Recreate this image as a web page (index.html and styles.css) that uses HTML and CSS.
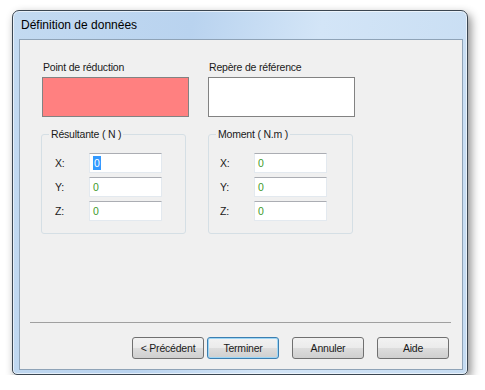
FILE: index.html
```html
<!DOCTYPE html>
<html lang="fr">
<head>
    <meta charset="utf-8">
    <title>Définition de données</title>
    <link rel="stylesheet" href="styles.css">
</head>
<body>
    <div class="window">
        <div class="titlebar">Définition de données</div>
        <div class="client">
            <div class="refs">
                <div class="ref">
                    <div class="ref-label">Point de réduction</div>
                    <div class="ref-box red"></div>
                </div>
                <div class="ref">
                    <div class="ref-label">Repère de référence</div>
                    <div class="ref-box"></div>
                </div>
            </div>
            <div class="groups">
                <div class="group">
                    <div class="group-title">Résultante ( N )</div>
                    <div class="row"><span class="axis">X:</span><div class="field"><span class="sel">0</span></div></div>
                    <div class="row"><span class="axis">Y:</span><div class="field">0</div></div>
                    <div class="row"><span class="axis">Z:</span><div class="field">0</div></div>
                </div>
                <div class="group moment">
                    <div class="group-title">Moment ( N.m )</div>
                    <div class="row"><span class="axis">X:</span><div class="field">0</div></div>
                    <div class="row"><span class="axis">Y:</span><div class="field">0</div></div>
                    <div class="row"><span class="axis">Z:</span><div class="field">0</div></div>
                </div>
            </div>
            <div class="footer">
                <div class="separator"></div>
                <div class="buttons">
                    <button class="btn">&lt; Précédent</button>
                    <button class="btn default">Terminer</button>
                    <button class="btn spaced">Annuler</button>
                    <button class="btn spaced">Aide</button>
                </div>
            </div>
        </div>
    </div>
</body>
</html>
```

FILE: styles.css
```css
body {
    margin: 0;
    padding: 10px 0 0 12px;
    background-color: #fff;
    font-family: 'Liberation Sans', Arial, sans-serif;
    font-size: 10.5px;
    letter-spacing: -0.2px;
    color: #1a1a1a;
}
.window {
    width: 456px;
    height: 365px;
    box-sizing: border-box;
    border: 1px solid #3b4651;
    border-radius: 7px 7px 5px 5px;
    background: linear-gradient(100deg, #c3daf1 0%, #b9d3ef 35%, #d3e5f7 60%, #c6dcf2 100%);
    box-shadow: 3px 4px 10px rgba(0, 0, 0, 0.45), inset 0 0 0 1px rgba(255, 255, 255, 0.6);
    display: flex;
    flex-direction: column;
}
.titlebar {
    height: 28px;
    line-height: 28px;
    padding-left: 8px;
    font-size: 12px;
    letter-spacing: 0;
    color: #000;
}
.client {
    margin: 0 4px 4px 6px;
    height: 332px;
    box-sizing: border-box;
    border: 1px solid #8fa3b7;
    background-color: #f0f0f0;
    display: flex;
    flex-direction: column;
}
.refs {
    display: flex;
    gap: 19px;
    padding: 20px 0 0 22px;
}
.ref {
    width: 147px;
}
.ref-label {
    line-height: 14px;
    margin-bottom: 3px;
    padding-left: 1px;
}
.ref-box {
    height: 40px;
    box-sizing: border-box;
    border: 1px solid #828282;
    background-color: #fff;
}
.ref-box.red {
    background-color: #ff8080;
}
.groups {
    display: flex;
    gap: 22px;
    padding: 17px 0 0 21px;
}
.group {
    width: 145px;
    height: 100px;
    box-sizing: border-box;
    border: 1px solid #d5dfe5;
    border-radius: 3px;
}
.group-title {
    width: fit-content;
    margin: -8px 0 12px 7px;
    padding: 0 2px;
    line-height: 14px;
    background-color: #f0f0f0;
}
.row {
    display: flex;
    align-items: center;
    height: 20px;
    margin-bottom: 4px;
    padding-left: 13px;
}
.moment .row {
    padding-left: 11px;
}
.axis {
    width: 34px;
}
.field {
    width: 73px;
    height: 20px;
    box-sizing: border-box;
    border: 1px solid #e3e9ef;
    border-top-color: #abadb3;
    background-color: #fff;
    padding-left: 3px;
    line-height: 18px;
    color: #3f9a2c;
}
.sel {
    background-color: #3399ff;
    color: #fff;
    padding: 1px 1px;
}
.footer {
    margin-top: auto;
    padding-bottom: 10px;
}
.separator {
    height: 1px;
    margin: 0 11px 14px 10px;
    background-color: #a0a0a0;
}
.buttons {
    display: flex;
    justify-content: flex-end;
    gap: 3px;
    padding-right: 13px;
}
.btn {
    width: 72px;
    height: 22px;
    box-sizing: border-box;
    border: 1px solid #707070;
    border-radius: 3px;
    background: linear-gradient(#f2f2f2 0%, #ebebeb 50%, #dddddd 50%, #cfcfcf 100%);
    font-family: 'Liberation Sans', Arial, sans-serif;
    font-size: 10.5px;
    letter-spacing: -0.2px;
    color: #1a1a1a;
    padding: 0;
}
.btn.default {
    border-color: #3c7fb1;
    box-shadow: inset 0 0 0 1px #9ed6f5;
}
.btn.spaced {
    margin-left: 10px;
}
```
